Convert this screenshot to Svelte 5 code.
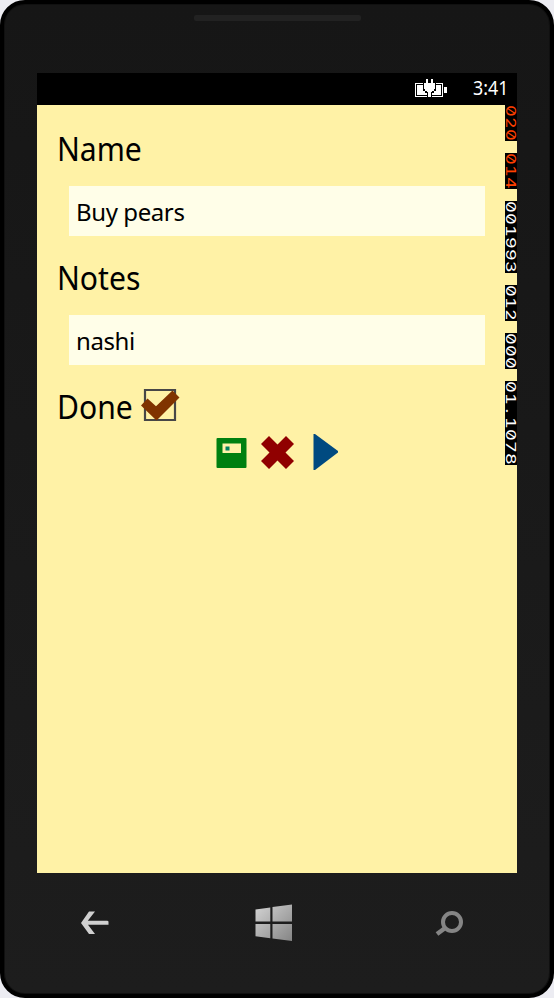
<script>
  let name = $state('Buy pears');
  let notes = $state('nashi');
  const counters = [
    { text: '020', warn: true },
    { text: '014', warn: true },
    { text: '001993' },
    { text: '012' },
    { text: '000' },
    { text: '01.1078' }
  ];
</script>

<div class="backdrop">
  <div class="phone">
    <div class="top"><div class="speaker"></div></div>
    <div class="screen">
      <div class="status">
        <svg class="battery" width="34" height="20" viewBox="0 0 34 20" shape-rendering="crispEdges">
          <path d="M0 4h28v14H0z" fill="#fff" />
          <path d="M1 5h26v12H1z" fill="#000" />
          <path d="M2 6h24v10H2z" fill="#fff" />
          <path d="M29 8h3v6h-3z" fill="#fff" />
          <path d="M8 3h13v9h-2v2h-2v5h-5v-5h-2v-2H8z" fill="#000" />
          <path d="M11 0h2v4h3V0h2v4h2v6h-1v2h-2v1h-1v5h-3v-5h-1v-1h-2v-2H9V4h2z" fill="#fff" />
        </svg>
        <span class="time">3:41</span>
      </div>
      <div class="app">
        <div class="form">
          <div class="label"><span>Name</span></div>
          <div class="field"><input bind:value={name} aria-label="Name" /></div>
          <div class="label"><span>Notes</span></div>
          <div class="field"><input bind:value={notes} aria-label="Notes" /></div>
          <div class="label done">
            <span>Done</span>
            <svg width="42" height="36" viewBox="0 0 42 36">
              <path d="M5 4h30v30H5z" fill="none" stroke="#474747" stroke-width="2.200" />
              <path d="M1 19.500 7.500 12.500 16 20.200 32.500 4.500 39.500 11.500 16.500 34.500z" fill="#803300" />
            </svg>
          </div>
          <div class="actions">
            <svg width="31" height="36" viewBox="0 0 31 36">
              <path d="M1.500 4h28q1 0 1 1v28q0 1-1 1h-28q-1 0-1-1V5q0-1 1-1z" fill="#008010" />
              <path d="M6.500 9.500H25V19H6.500z" fill="#fff2a8" />
              <path d="M9.500 12.500h4v4h-4z" fill="#008060" />
            </svg>
            <svg width="34" height="36" viewBox="0 0 34 36">
              <path d="M8 2 16.500 10.500 25 2 33 10 24.500 18.500 33 27 25 35 16.500 26.500 8 35 0 27 8.500 18.500 0 10z" fill="#900000" />
            </svg>
            <svg class="play" width="26" height="36" viewBox="0 0 26 36">
              <path d="M.5 0H2L25 17v1.500L2 36H.5z" fill="#004a80" />
            </svg>
          </div>
        </div>
        <div class="counters">
          {#each counters as c}
            <div class="counter" class:warn={c.warn}>
              {#each c.text.split('') as ch}<span class="cell"><span class="digit">{ch}</span></span>{/each}
            </div>
          {/each}
        </div>
      </div>
    </div>
    <div class="nav">
      <svg width="28" height="24" viewBox="0 0 28 24">
        <path d="M8 .5h6L6.800 9.800H26q1.500 0 1.500 1v3H7L14 23H8L0 12z" fill="#d0d0d0" />
      </svg>
      <svg class="windows" width="38" height="38" viewBox="0 0 38 38">
        <defs>
          <linearGradient id="metal" x1="0" y1="0" x2="1" y2="1">
            <stop offset="0" stop-color="#d4d4d4" /><stop offset="1" stop-color="#858585" />
          </linearGradient>
        </defs>
        <path d="M.5 5.500 15.300 3.500V17.500H.5zM17.500 3.100 37 .5V17.500H17.500zM.5 20h14.800v14.200L.5 32.200zM17.500 20H37v17l-19.500-2.500z" fill="url(#metal)" />
      </svg>
      <svg width="30" height="28" viewBox="0 0 30 28">
        <circle cx="18" cy="13" r="9" fill="none" stroke="#858585" stroke-width="4" />
        <path d="M10.500 19.500 3 25" stroke="#858585" stroke-width="4.500" stroke-linecap="butt" />
      </svg>
    </div>
  </div>
</div>

<style>
  .backdrop { width: 554px; height: 998px; background: #ececf2; overflow: hidden; }
  .phone {
    box-sizing: border-box; width: 554px; height: 998px; border: 4px solid #000;
    border-radius: 25px; background: linear-gradient(#161616, #1d1d1d);
    box-shadow: inset 0 0 0 1px #101010;
    display: flex; flex-direction: column; align-items: center;
    font-family: "Noto Sans", "Open Sans", sans-serif;
  }
  .top { height: 69px; display: flex; align-items: flex-start; }
  .speaker { width: 167px; height: 6px; margin-top: 11px; border-radius: 2px; background: #222; }
  .screen { width: 480px; height: 800px; display: flex; flex-direction: column; }
  .status { height: 32px; background: #000; display: flex; align-items: flex-start; color: #fff; }
  .battery { margin: 6px 0 0 378px; flex: none; }
  .time { font-size: 20px; line-height: 30px; margin-left: 24px; transform: scaleX(.89); transform-origin: left; }
  .app { flex: 1; display: flex; background: #fff2a6; }
  .form { width: 468px; padding: 19px 20px 0; box-sizing: border-box; }
  .label { height: 50px; line-height: 50px; font-size: 32px; color: #000; }
  .label span { display: inline-block; transform: scaleX(.94); transform-origin: left; }
  .field { margin: 12px 0 17px 12px; width: 416px; }
  input {
    box-sizing: border-box; width: 416px; height: 50px; border: 0; padding: 0 7px;
    background: #fffee8; font: 24px "Noto Sans", "Open Sans", sans-serif; letter-spacing: -.4px;
    color: #000; outline: none; display: block;
  }
  .done { display: flex; gap: 2px; }
  .done svg { margin-top: 3.5px; }
  .actions { display: flex; justify-content: center; gap: 14px; margin-top: 2px; width: 440px; }
  .play { margin-left: 4px; }
  .counters { width: 12px; display: flex; flex-direction: column; gap: 12px; }
  .counter { background: #000; color: #fff; width: 12px; display: flex; flex-direction: column; }
  .warn { color: #ff4000; }
  .cell { width: 12px; height: 12px; display: flex; align-items: center; justify-content: center; }
  .digit {
    font: 13.5px/12px Inter, sans-serif; font-feature-settings: "zero" 1, "tnum" 1;
    transform: rotate(90deg) scaleX(1.35);
  }
  .nav { flex: 1; width: 383px; margin-right: 10px; display: flex; align-items: center; justify-content: space-between; padding-bottom: 21px; }
  .windows { margin-left: 6px; }
</style>
